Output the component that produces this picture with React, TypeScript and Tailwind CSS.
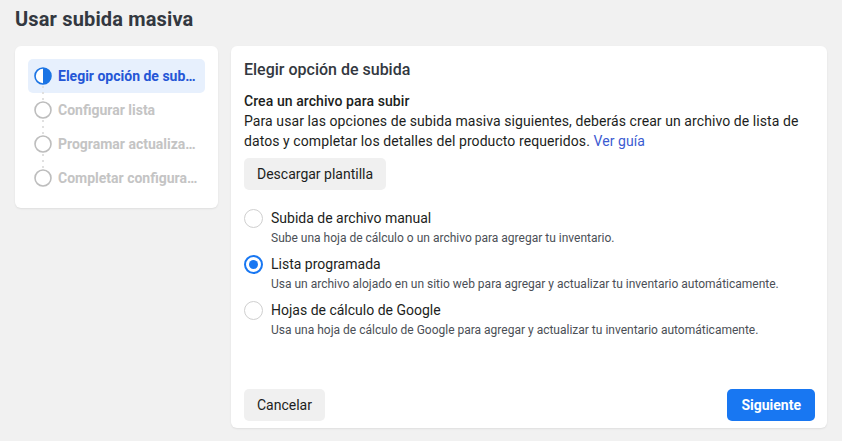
import { useState } from "react";

const steps = [
  "Elegir opción de subida",
  "Configurar lista",
  "Programar actualizaciones",
  "Completar configuración",
];

const options = [
  {
    id: "manual",
    title: "Subida de archivo manual",
    desc: "Sube una hoja de cálculo o un archivo para agregar tu inventario.",
  },
  {
    id: "scheduled",
    title: "Lista programada",
    desc: "Usa un archivo alojado en un sitio web para agregar y actualizar tu inventario automáticamente.",
  },
  {
    id: "sheets",
    title: "Hojas de cálculo de Google",
    desc: "Usa una hoja de cálculo de Google para agregar y actualizar tu inventario automáticamente.",
  },
];

const StepIcon = ({ active }: { active: boolean }) =>
  active ? (
    <svg width="18" height="18" viewBox="0 0 18 18" className="shrink-0">
      <circle cx="9" cy="9" r="8" fill="#fff" stroke="#1b74e4" strokeWidth="1.6" />
      <path d="M9 1 A8 8 0 0 1 9 17 Z" fill="#1b74e4" />
    </svg>
  ) : (
    <svg width="18" height="18" viewBox="0 0 18 18" className="shrink-0">
      <circle cx="9" cy="9" r="8" fill="#fff" stroke="#bdbdbd" strokeWidth="1.6" />
    </svg>
  );

export default function App() {
  const [selected, setSelected] = useState("scheduled");

  return (
    <div
      className="w-[842px] h-[441px] bg-[#f1f1f1] px-[15px] pt-[7px] overflow-hidden"
      style={{ fontFamily: "Roboto, 'Liberation Sans', sans-serif" }}
    >
      <h1 className="text-[20px] leading-[24px] font-bold tracking-[0.15px] text-[#333840]">Usar subida masiva</h1>
      <div className="flex gap-[13px] mt-[15px] items-start">
        <div className="w-[203px] bg-white rounded-[6px] shadow-[0_1px_2px_rgba(0,0,0,0.08)] p-[13px]">
          {steps.map((s, i) => (
            <div key={s} className="relative">
              <div
                className={
                  i === 0
                    ? "flex items-center gap-[6px] h-[34px] px-[6px] rounded-[5px] bg-[#e7f0fd]"
                    : "flex items-center gap-[6px] h-[34px] px-[6px] rounded-[5px]"
                }
              >
                <StepIcon active={i === 0} />
                <span
                  className={
                    i === 0
                      ? "truncate text-[14px] font-bold text-[#2456d6]"
                      : "truncate text-[14px] font-bold text-[#c4c4c4]"
                  }
                >
                  {s}
                </span>
              </div>
              {i < steps.length - 1 && (
                <div className="absolute left-[14px] top-[27px] h-[14px] w-[2px] flex flex-col justify-between">
                  <div className="h-[2px] bg-[#e0e0e0]" />
                  <div className="h-[2px] bg-[#e0e0e0]" />
                  <div className="h-[2px] bg-[#e0e0e0]" />
                </div>
              )}
            </div>
          ))}
        </div>

        <div className="w-[598px] h-[382px] bg-white rounded-[6px] shadow-[0_1px_2px_rgba(0,0,0,0.08)] pl-[13px] pr-[12px] pt-[14px] pb-[7px] flex flex-col text-[#1c1e21]">
          <h2 className="text-[16px] leading-[20px] font-medium text-[#333840]">Elegir opción de subida</h2>
          <div className="mt-[11px] text-[14px] leading-[20px] tracking-[0.08px]">
            <div className="font-medium text-[#1c1e21]">Crea un archivo para subir</div>
            <p className="text-[#1c1e21]">
              Para usar las opciones de subida masiva siguientes, deberás crear un archivo de lista de datos y
              completar los detalles del producto requeridos.{" "}
              <a className="text-[#3b5bd1]">Ver guía</a>
            </p>
          </div>
          <button className="mt-[7px] self-start h-[32px] px-[13px] rounded-[5px] bg-[#f0f0f0] text-[14px] text-[#1c1e21]">
            Descargar plantilla
          </button>

          <div className="mt-[18px] flex flex-col gap-[8px]">
            {options.map((o) => {
              const on = selected === o.id;
              return (
                <label key={o.id} className="flex gap-[8px] cursor-pointer" onClick={() => setSelected(o.id)}>
                  <span
                    className={
                      on
                        ? "mt-[1px] w-[19px] h-[19px] rounded-full border-2 border-[#1877f2] flex items-center justify-center shrink-0"
                        : "mt-[1px] w-[19px] h-[19px] rounded-full border border-[#cfcfcf] shrink-0"
                    }
                  >
                    {on && <span className="w-[9px] h-[9px] rounded-full bg-[#1877f2]" />}
                  </span>
                  <span className="flex flex-col">
                    <span className="text-[14px] leading-[20px] text-[#1c1e21]">{o.title}</span>
                    <span className="mt-[2px] text-[12px] leading-[16px] text-[#4b4f56]">{o.desc}</span>
                  </span>
                </label>
              );
            })}
          </div>

          <div className="mt-auto flex justify-between">
            <button className="h-[32px] px-[13px] rounded-[5px] bg-[#f0f0f0] text-[14px] text-[#1c1e21]">
              Cancelar
            </button>
            <button className="h-[32px] px-[14px] rounded-[5px] bg-[#1877f2] text-[14px] font-bold text-white">
              Siguiente
            </button>
          </div>
        </div>
      </div>
    </div>
  );
}
